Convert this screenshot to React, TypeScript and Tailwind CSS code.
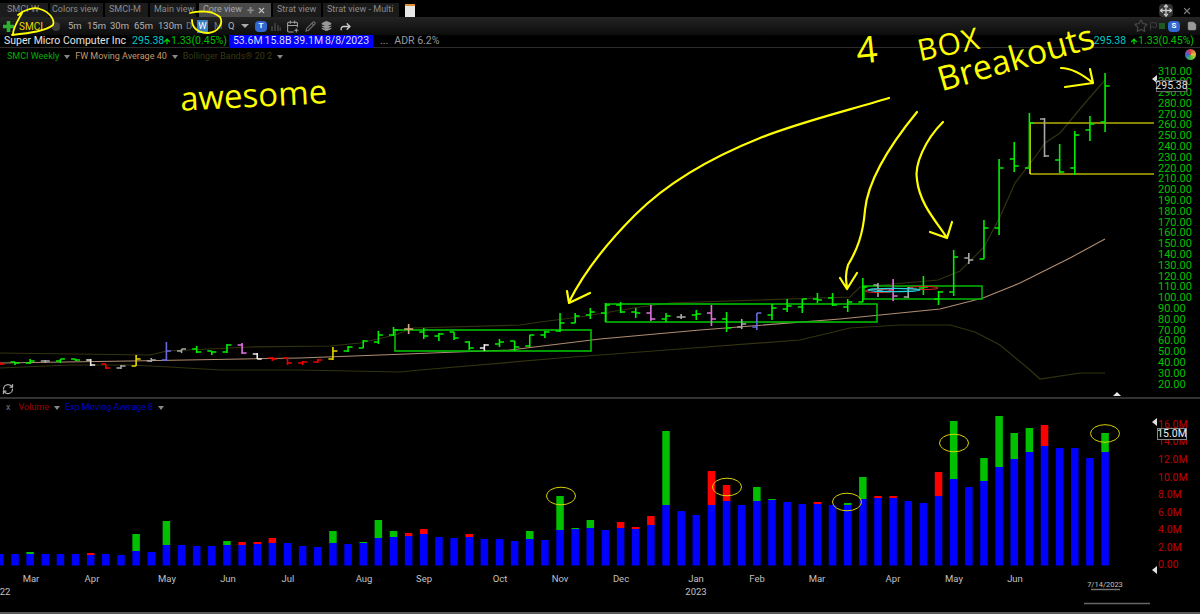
import { ArrowUp, CalendarPlus, Flag, Forward, Layers, Move, Pencil, RefreshCw, Save, Star, X } from 'lucide-react';

type Bar = [number, number, number, number, string?];

const W = '#e8e8e8';
const G = '#a8a8a8';
const R = '#f00000';
const Y = '#e8d800';
const V = '#6a6ae0';
const P = '#e070e0';
const T = '#d9a87a';

// hi, lo, open, close as page y, colour defaults to green
const bars: Bar[] = [
  [362, 365, 363, 364, R], [362, 365, 362, 363], [359, 364, 363, 361], [360, 363, 361, 361, G], [359, 363, 361, 359],
  [359, 361, 359, 360], [359, 366, 360, 365, W], [364, 369, 364, 368, R], [365, 369, 368, 366, G], [355, 366, 366, 359, Y],
  [358, 362, 361, 360, G], [342, 361, 360, 351, V], [349, 353, 351, 349, G], [346, 353, 349, 352], [351, 355, 351, 352],
  [344, 353, 352, 345], [343, 354, 345, 353, P], [353, 359, 354, 359, W], [357, 361, 358, 359, R], [358, 365, 358, 363, R],
  [361, 365, 363, 362, R], [359, 363, 362, 360, R], [347, 360, 359, 351, Y], [346, 352, 351, 347], [340, 348, 348, 341],
  [331, 344, 342, 335], [327, 336, 335, 330], [324, 334, 329, 329, T], [328, 339, 332, 336], [333, 341, 336, 334],
  [332, 340, 332, 338], [341, 350, 342, 348], [344, 351, 348, 345, W], [339, 347, 344, 342], [341, 351, 341, 347],
  [335, 347, 346, 335], [331, 338, 335, 332], [313, 332, 331, 323], [313, 323, 323, 316], [308, 319, 315, 312],
  [303, 322, 313, 305], [302, 313, 305, 312], [308, 318, 312, 313], [305, 321, 313, 319, P], [313, 322, 319, 316],
  [314, 319, 317, 317, G], [310, 320, 315, 314], [305, 326, 313, 319, P], [312, 332, 319, 328], [319, 329, 327, 324, G],
  [313, 330, 327, 313, V], [304, 320, 315, 308], [299, 312, 309, 306], [299, 313, 307, 299], [293, 303, 299, 300],
  [293, 306, 298, 305], [299, 312, 307, 302], [278, 302, 302, 287], [283, 297, 285, 290, G], [279, 301, 290, 296, P],
  [287, 298, 297, 288, G], [276, 295, 288, 287], [291, 305, 299, 292], [250, 296, 292, 257], [253, 264, 258, 260, G],
  [220, 259, 259, 228], [159, 235, 228, 168], [142, 172, 159, 166], [113, 169, 168, 123], [118, 157, 119, 156, G],
  [144, 173, 160, 172], [131, 175, 168, 135], [116, 141, 130, 124], [73, 132, 122, 86],
];

// ema top, volume top, colour of the part above the ema
const volumes: [number, number?, string?][] = [
  [554], [554], [554, 552, 'g'], [554], [554], [554], [555, 553, 'r'], [554], [555], [551, 534, 'g'],
  [552], [545, 521, 'g'], [545], [546], [546], [545, 541, 'g'], [545, 542, 'r'], [544, 542, 'r'], [543, 538, 'r'], [543],
  [546], [547], [543, 531, 'g'], [544], [543, 542, 'g'], [538, 520, 'g'], [537, 531, 'g'], [536, 533, 'r'], [534, 529, 'r'], [537],
  [538], [537, 534, 'r'], [539], [539], [541], [539, 531, 'g'], [540], [530, 496, 'g'], [529, 528, 'g'], [528, 520, 'g'],
  [530], [528, 522, 'r'], [529, 527, 'r'], [525, 516, 'r'], [505, 431, 'g'], [511], [515], [505, 471, 'r'], [501, 485, 'r'], [505],
  [501, 487, 'g'], [500, 499, 'g'], [502], [504], [504, 502, 'r'], [505], [505, 503, 'g'], [499, 477, 'g'], [498, 496, 'r'], [498, 496, 'r'],
  [501], [503], [496, 472, 'r'], [479, 421, 'g'], [487], [481, 458, 'g'], [467, 416, 'g'], [459, 433, 'g'], [452, 428, 'g'], [446, 425, 'r'],
  [448], [448], [458], [452, 433, 'g'],
];

const months: [string, number][] = [
  ['Mar', 31], ['Apr', 92], ['May', 167], ['Jun', 228], ['Jul', 288], ['Aug', 364], ['Sep', 424], ['Oct', 500],
  ['Nov', 560], ['Dec', 621], ['Jan', 696], ['Feb', 757], ['Mar', 817], ['Apr', 893], ['May', 954], ['Jun', 1015],
];

const priceLabels = Array.from({ length: 30 }, (_, i) => (310 - i * 10).toFixed(2));
const volumeLabels = ['16.0M', '14.0M', '12.0M', '10.0M', '8.0M', '6.0M', '4.0M', '2.0M', '0.00'];

const barX = (i: number) => -0.14 + 15.14 * i;

const ma40 = 'M0 363 L130 361 L300 358 L380 355 L510 350 L600 339 L700 330 L840 319 L940 309 L983 298 L1020 283 L1070 258 L1105 239';
const upper = 'M0 353 L150 355 L167 351 L250 347 L330 346 L360 343 L395 335 L413 328 L520 325 L540 322 L580 317 L640 307 L670 303 L850 297 L860 287 L938 280 L960 271 L984 247 L1000 217 L1015 183 L1035 157 L1045 143 L1060 133 L1085 103 L1105 80';
const lower = 'M0 368 L70 365 L130 365 L170 367 L220 370 L300 370 L400 372 L420 370 L560 358 L680 349 L800 340 L850 328 L900 325 L950 325 L975 332 L1000 345 L1030 370 L1040 379 L1080 373 L1105 373';

const ellipses: [number, number][] = [[561, 496], [727, 487], [847, 502], [954, 443], [1105, 433.5]];

function Tabs() {
  return (
    <div className="flex h-[17px] items-end text-[9px]">
      <div className="flex h-[14px] w-[48px] items-center bg-[#1b1b1b] pl-[7px] text-[#8a8a8a]">SMCI-W</div>
      <div className="ml-[2px] flex h-[14px] w-[53px] items-center bg-[#1b1b1b] pl-[2px] text-[#8a8a8a]">Colors view</div>
      <div className="ml-[2px] flex h-[14px] w-[43px] items-center bg-[#1b1b1b] pl-[4px] text-[#8a8a8a]">SMCI-M</div>
      <div className="ml-[2px] flex h-[14px] w-[46px] items-center bg-[#1b1b1b] pl-[4px] text-[#8a8a8a]">Main view</div>
      <div className="ml-[3px] flex h-[14px] w-[72px] items-center bg-[#4a4a4a] pl-[4px] text-[#a8a8a8]">
        <span className="w-[38px]">Core view</span>
        <span className="ml-[6px] text-[13px] leading-none font-bold text-[#8a8a8a]">+</span>
        <X className="ml-[3px] h-[9px] w-[9px] text-[#c0c0c0]" strokeWidth={3} />
      </div>
      <div className="ml-[2px] flex h-[14px] w-[48px] items-center bg-[#1b1b1b] pl-[4px] text-[#8a8a8a]">Strat view</div>
      <div className="ml-[2px] flex h-[14px] w-[76px] items-center bg-[#1b1b1b] pl-[4px] text-[#8a8a8a]">Strat view - Multi</div>
      <div className="ml-[6px] h-[13px] w-[10px] border-t-2 border-t-[#e09030] bg-[#e8e8e8]" />
      <div className="ml-auto flex items-center">
        <Move className="h-[13px] w-[14px] rounded-sm bg-[#333] text-[#c8c8c8]" strokeWidth={2.5} />
        <X className="ml-[9px] mr-[8px] h-[10px] w-[10px] text-[#777]" strokeWidth={3} />
      </div>
    </div>
  );
}

function Toolbar() {
  return (
    <div className="flex h-[18px] items-center bg-gradient-to-b from-[#242424] to-[#0c0c0c] text-[9.5px] text-[#b4b4b4]">
      <svg className="ml-[3px] h-[11px] w-[11px]" viewBox="0 0 11 11"><path d="M5.5 0v11M0 5.5h11" stroke="#30b030" strokeWidth="3.6" /></svg>
      <span className="ml-[5px] w-[33px] text-[10px] text-[#e8d800]">SMCI</span>
      <span className="h-[9px] w-[8px] rounded-sm bg-[#3c3c3c]" />
      <span className="ml-[8px] w-[19px]">5m</span>
      <span className="w-[23px]">15m</span>
      <span className="w-[24px]">30m</span>
      <span className="w-[24px]">65m</span>
      <span className="w-[28px]">130m</span>
      <span className="w-[11px] text-[#777]">D</span>
      <span className="flex h-[13px] w-[11px] items-center justify-center bg-[#3a7fbe] text-white">W</span>
      <span className="ml-[6px] w-[14px] text-[#777]">M</span>
      <span className="w-[12px]">Q</span>
      <span className="ml-[1px] h-0 w-0 border-x-[4px] border-t-[4px] border-x-transparent border-t-[#aaa]" />
      <span className="ml-[6px] flex h-[11px] w-[12px] items-center justify-center rounded-sm bg-[#3367d0] text-[8px] font-bold text-white">T</span>
      <svg className="ml-[4px] h-[10px] w-[10px]" viewBox="0 0 10 10"><path d="M1 10V5M4 10V2M7 10V4M9.5 10V6" stroke="#3a3a3a" strokeWidth="2" /></svg>
      <CalendarPlus className="ml-[5px] h-[13px] w-[13px] text-[#a0a0a0]" strokeWidth={2} />
      <Pencil className="ml-[6px] h-[11px] w-[11px] text-[#707070]" strokeWidth={2.4} />
      <Layers className="ml-[5px] h-[12px] w-[11px] fill-[#999] text-[#999]" />
      <Forward className="ml-[7px] h-[13px] w-[13px] text-[#d0d0d0]" strokeWidth={2.4} />
      <div className="ml-auto flex items-center">
        <Star className="h-[14px] w-[14px] text-[#4a4a4a]" strokeWidth={2} />
        <Flag className="ml-[1px] h-[10px] w-[9px] text-[#4a4a4a]" strokeWidth={2} />
        <span className="ml-[1px] h-[6px] w-[6px] bg-[#1e5a1e]" />
        <span className="ml-[3px] flex h-[11px] w-[12px] items-center justify-center rounded-sm bg-[#3367d0] text-[8px] font-bold text-white">S</span>
        <Save className="ml-[7px] mr-[3px] h-[12px] w-[10px] fill-[#9a9a9a] text-[#9a9a9a]" />
      </div>
    </div>
  );
}

function QuoteRow() {
  return (
    <div className="flex h-[13px] items-center border-b border-[#2c2c2c] text-[10.5px] leading-none">
      <span className="ml-[4px] w-[128px] text-[#e4e4e4]">Super Micro Computer Inc</span>
      <span className="w-[31px] text-[#00c8c8]">295.38</span>
      <ArrowUp className="h-[11px] w-[8px] text-[#00d000]" strokeWidth={4} />
      <span className="w-[58px] text-[#00c000]">1.33(0.45%)</span>
      <span className="flex h-[13px] w-[144px] items-center justify-around bg-[#0000ff] px-[3px] text-[#dcdcff]">
        <span>53.6M</span><span>15.8B</span><span>39.1M</span><span>8/8/2023</span>
      </span>
      <span className="ml-[7px] text-[#9a9a9a]">...</span>
      <span className="ml-[6px] text-[#9a9a9a]">ADR 6.2%</span>
      <div className="ml-auto flex items-center pr-[6px]">
        <span className="text-[#00c8c8]">295.38</span>
        <ArrowUp className="ml-[4px] h-[11px] w-[8px] text-[#00d000]" strokeWidth={4} />
        <span className="text-[#00c000]">1.33(0.45%)</span>
      </div>
    </div>
  );
}

function Caret({ className }: { className: string }) {
  return <span className={`h-0 w-0 border-x-[3px] border-t-[4px] border-x-transparent border-t-[#888] ${className}`} />;
}

function PriceChart() {
  return (
    <svg className="absolute inset-0 h-full w-full" viewBox="0 48 1154 349">
      <path d={lower} fill="none" stroke="#33320f" strokeWidth="1.2" />
      <path d={upper} fill="none" stroke="#33320f" strokeWidth="1.2" />
      <path d={ma40} fill="none" stroke="#b08c70" strokeWidth="1.1" />
      <rect x="395" y="330" width="196" height="21" fill="none" stroke="#00c000" strokeWidth="1.6" />
      <rect x="606" y="304" width="271" height="18" fill="none" stroke="#00c000" strokeWidth="1.6" />
      <rect x="864" y="286" width="118" height="13" fill="none" stroke="#00b000" strokeWidth="1.6" />
      <path d="M1030 123H1154M1030 174H1154" stroke="#b4b000" strokeWidth="1.6" />
      <path d="M1030 123V174" stroke="#f0f000" strokeWidth="1.6" />
      {bars.map(([hi, lo, open, close, color], i) => {
        const x = barX(i);
        const stroke = color ?? '#00f000';
        return (
          <g key={i} stroke={stroke} strokeWidth="1.6">
            <path d={`M${x} ${hi}V${lo}`} />
            <path d={`M${x - 4.5} ${open}H${x}M${x} ${close}H${x + 4.5}`} />
          </g>
        );
      })}
      <ellipse cx="879" cy="291" rx="14" ry="1.6" fill="none" stroke="#e02020" strokeWidth="1" />
      <ellipse cx="924" cy="288" rx="14" ry="1.6" fill="none" stroke="#e02020" strokeWidth="1" />
      <ellipse cx="894" cy="290" rx="26" ry="1.6" fill="none" stroke="#20d8e0" strokeWidth="1.2" />
      <path d="M1113 396l4-4 4 4z" fill="#e8e8e8" />
    </svg>
  );
}

function VolumeChart() {
  return (
    <svg className="absolute inset-0 h-full w-full" viewBox="0 399 1154 213">
      {volumes.map(([ema, top, kind], i) => {
        const x = barX(i) - 3.75;
        return (
          <g key={i}>
            {top !== undefined && (
              <rect x={x} y={top} width="7.5" height={ema - top} fill={kind === 'g' ? '#00c000' : '#ff0000'} />
            )}
            <rect x={x} y={ema} width="7.5" height={565.5 - ema} fill="#0000ff" />
          </g>
        );
      })}
      {ellipses.map(([cx, cy]) => (
        <ellipse key={cx} cx={cx} cy={cy} rx="14.5" ry="8.8" fill="none" stroke="#d8d000" strokeWidth="1" />
      ))}
      <g fontSize="9.5" fill="#c0c0c0" textAnchor="middle" fontFamily="Roboto, sans-serif">
        {months.map(([m, x]) => (
          <text key={m + x} x={x} y="582">{m}</text>
        ))}
        <text x="5" y="595">22</text>
        <text x="696" y="595">2023</text>
        <text x="1105" y="587" fontSize="7.5">7/14/2023</text>
      </g>
      <path d="M1091 589.5H1120" stroke="#777" strokeWidth="1.4" />
      <path d="M1084 603.5H1150" stroke="#666" strokeWidth="1.4" />
    </svg>
  );
}

// highlighter marks drawn on top of the whole window
function Annotations() {
  const pen = { fill: 'none', stroke: '#ffff00', strokeWidth: 2.2, strokeLinecap: 'round', strokeLinejoin: 'round' } as const;
  return (
    <svg className="pointer-events-none absolute inset-0 h-full w-full" viewBox="0 0 1200 614">
      <g {...pen}>
        <path d="M889 98C850 110 800 122 760 138C710 158 665 185 635 215C610 240 585 270 569 302M567 291L569 303L590 293" />
        <path d="M917 112C890 145 868 180 865 210C863 235 857 250 848 265C845 275 846 280 847 288M840 278L847 289L857 273" />
        <path d="M943 122C925 140 914 165 917 180C920 205 937 222 947 238M930 232L947 238L952 222" />
        <path d="M1061 68C1072 68 1082 74 1093 83M1090 69L1093 83L1065 87" />
        <path d="M22 13C17 22 13 28 13 34M18 15C25 9 35 7 40 9C50 12 55 20 53 25C46 31 30 33 12 35" strokeWidth="1.8" />
        <path d="M190 13C198 11 212 10 220 17C224 24 218 32 208 33C198 33 192 28 192 20" strokeWidth="1.8" />
      </g>
    </svg>
  );
}

function Handwriting() {
  return (
    <div className="pointer-events-none font-['Open_Sans',sans-serif] text-[#ffff00]">
      <span className="absolute left-[180px] top-[78px] -rotate-3 text-[33px] leading-none">awesome</span>
      <span className="absolute left-[856px] top-[30px] -rotate-6 text-[37px] leading-none">4</span>
      <span className="absolute left-[917px] top-[29px] -rotate-12 text-[30px] leading-none tracking-[1px]">BOX</span>
      <span className="absolute left-[938px] top-[62px] origin-left -rotate-[16deg] text-[34px] leading-none">Breakouts</span>
    </div>
  );
}

export default function App() {
  return (
    <div className="relative h-[614px] w-[1200px] overflow-hidden bg-black font-['Roboto',sans-serif] text-[9px] whitespace-nowrap">
      <Tabs />
      <Toolbar />
      <QuoteRow />

      <div className="flex h-[349px]">
        <div className="relative flex-1">
          <PriceChart />
          <div className="relative flex h-[17px] items-center pl-[7px]">
            <span className="text-[#00b000]">SMCI Weekly</span>
            <Caret className="ml-[5px]" />
            <span className="ml-[5px] text-[#c89868]">FW Moving Average 40</span>
            <Caret className="ml-[5px]" />
            <span className="ml-[5px] text-[#3a3812]">Bollinger Bands® 20 2</span>
            <Caret className="ml-[5px]" />
          </div>
          <RefreshCw className="absolute bottom-[2px] left-[2px] h-[12px] w-[12px] text-[#b0b0b0]" strokeWidth={2.5} />
        </div>
        <div className="relative w-[46px] pt-[17.6px] text-[11px] text-[#00c000]">
          {priceLabels.map((label) => (
            <div key={label} className="flex h-[10.8px] items-center pl-[4px] leading-none">{label}</div>
          ))}
          <span className="absolute left-[-2px] top-[27px] h-0 w-0 border-y-[4px] border-r-[5px] border-y-transparent border-r-[#e0e0e0]" />
          <span className="absolute left-[2px] top-[32px] flex h-[12px] w-[31px] items-center justify-center border border-[#666] bg-black text-[10.5px] leading-none text-[#e0e0e0]">295.38</span>
          <span className="absolute right-[4px] top-[1px] h-[11px] w-[11px] rounded-full bg-[conic-gradient(#e04040,#e0c040,#40c040,#4060e0,#e04040)]" />
        </div>
      </div>

      <div className="h-[2px] bg-[#333]" />

      <div className="flex h-[213px]">
        <div className="relative flex-1">
          <VolumeChart />
          <div className="relative flex h-[18px] items-center pl-[6px]">
            <span className="text-[#777]">x</span>
            <span className="ml-[8px] text-[#a00000]">Volume</span>
            <Caret className="ml-[5px]" />
            <span className="ml-[5px] text-[#0000c8]">Exp Moving Average 8</span>
            <Caret className="ml-[5px]" />
          </div>
        </div>
        <div className="relative flex w-[46px] flex-col pt-[17.2px] text-[10.5px] text-[#c00000]">
          {volumeLabels.map((label) => (
            <div key={label} className="flex h-[17.6px] items-center pl-[4px] leading-none">{label}</div>
          ))}
          <span className="absolute left-[-2px] top-[19px] h-0 w-0 border-y-[4px] border-r-[5px] border-y-transparent border-r-[#e0e0e0]" />
          <span className="absolute left-[-2px] top-[167px] h-0 w-0 border-y-[4px] border-r-[5px] border-y-transparent border-r-[#e0e0e0]" />
          <span className="absolute left-[3px] top-[29px] flex h-[12px] w-[30px] items-center justify-center border border-[#888] bg-black text-[10.5px] leading-none text-[#f0f0f0]">15.0M</span>
        </div>
      </div>

      <div className="h-[2px] bg-[#5a5a5a]" />

      <Annotations />
      <Handwriting />
    </div>
  );
}
